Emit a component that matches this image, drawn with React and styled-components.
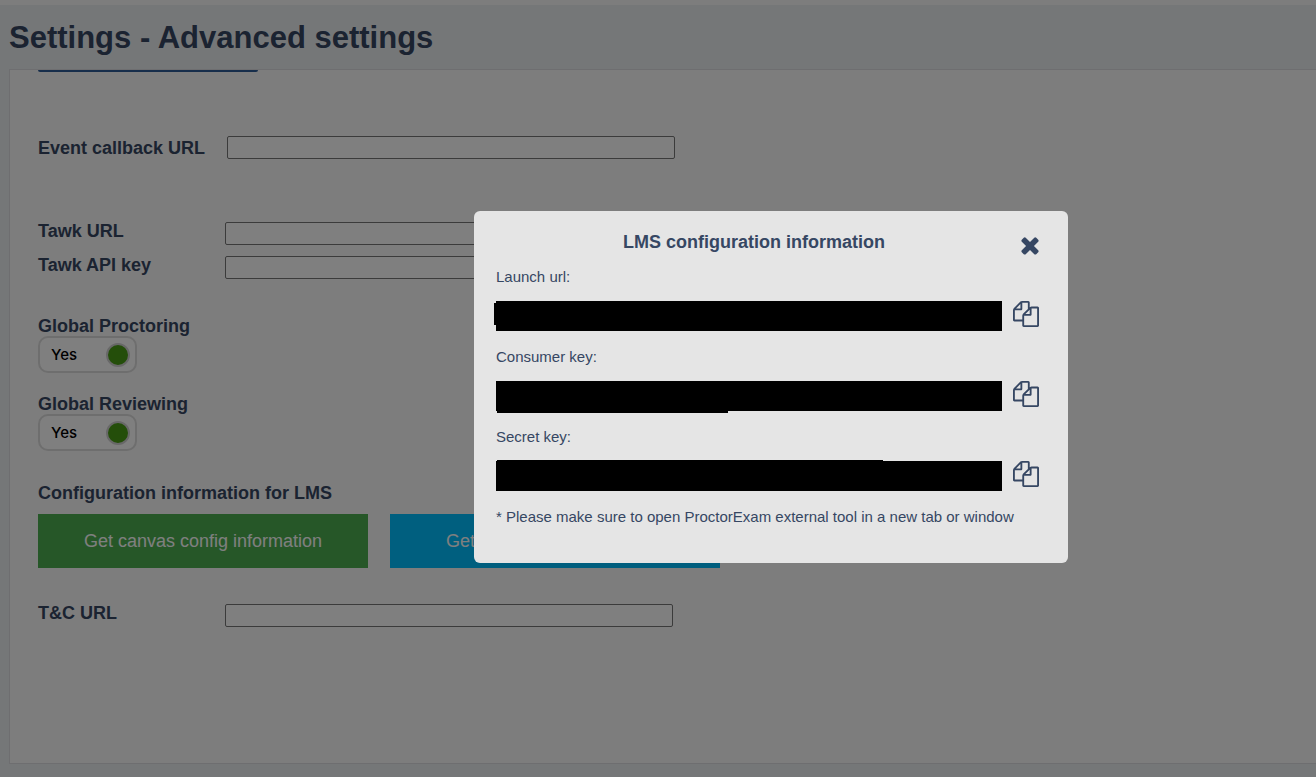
import React, { useState } from "react";
import styled, { createGlobalStyle } from "styled-components";

const ink = "#364763";
const blackFill = "linear-gradient(#000, #000)";

const GlobalStyle = createGlobalStyle`
  *, *::before, *::after { box-sizing: border-box; }
  body {
    margin: 0;
    background: #ebeef1;
    color: ${ink};
    font-family: "Liberation Sans", Arial, sans-serif;
    font-size: 15px;
  }
`;

const Page = styled.main`
  display: flex;
  flex-direction: column;
  min-height: 100vh;
  padding: 0 0 13px 9px;
  border-top: 5px solid #fbfbfb;
  overflow: hidden;
`;

const PageTitle = styled.h1`
  margin: 0;
  padding: 15px 0 13px;
  font-size: 31px;
  line-height: 36px;
`;

const Panel = styled.section`
  flex: 1;
  padding: 0 28px 40px;
  background: #fafafa;
  border: 1px solid #dcdde0;
  border-right: 0;
`;

const SectionEdge = styled.div`
  width: 220px;
  height: 2px;
  margin-bottom: 64px;
  background: #2f5d96;
  border-radius: 0 0 4px 4px;
`;

const Field = styled.div`
  display: grid;
  grid-template-columns: ${(p) => p.$labelWidth || 187}px minmax(0, 448px);
  align-items: ${(p) => p.$align || "start"};
  margin-bottom: ${(p) => p.$after || 0}px;
`;

const FieldLabel = styled.label`
  font-size: 18px;
  font-weight: bold;
  line-height: 18px;
`;

const SwitchLabel = styled(FieldLabel)`
  line-height: 20px;
`;

const TextBox = styled.input`
  width: 100%;
  height: 23px;
  padding: 1px 4px;
  background: #fff;
  border: 1px solid #767676;
  border-radius: 2px;
  font: inherit;
`;

const SwitchGroup = styled.div`
  display: flex;
  flex-direction: column;
  align-items: flex-start;
  margin-bottom: 21px;
`;

const GroupTitle = styled.h2`
  margin: 32px 0 0;
  font-size: 18px;
  line-height: 20px;
`;

const SwitchButton = styled.button`
  display: flex;
  align-items: center;
  justify-content: space-between;
  width: 99px;
  height: 37px;
  padding: 0 5px 0 11px;
  background: #fff;
  border: 2px solid #dcdcdc;
  border-radius: 10px;
  color: #000;
  font-family: Inter, "Liberation Sans", sans-serif;
  font-size: 15px;
  font-weight: 500;
`;

const SwitchKnob = styled.span`
  width: 24px;
  height: 24px;
  background: #489c14;
  border: 2px solid #d0d0d0;
  border-radius: 50%;
`;

const ButtonRow = styled.div`
  display: flex;
  gap: 22px;
  margin: 11px 0 36px;
`;

const ActionButton = styled.button`
  width: 330px;
  height: 54px;
  padding: 0;
  background: ${(p) => p.$color};
  border: 0;
  color: #fff;
  font-family: inherit;
  font-size: 18px;
`;

const Backdrop = styled.div`
  position: fixed;
  inset: 0;
  display: flex;
  align-items: center;
  justify-content: center;
  padding-left: 226px;
  padding-bottom: 3px;
  background: rgba(0, 0, 0, 0.5);
`;

const Dialog = styled.div`
  width: 594px;
  padding: 20px 28px 36px 22px;
  background: #e5e5e5;
  border-radius: 6px;
`;

const DialogHeader = styled.header`
  display: flex;
  align-items: flex-start;
  height: 36px;
`;

const DialogTitle = styled.h2`
  flex: 1;
  margin: 0;
  font-size: 18px;
  line-height: 22px;
  text-align: center;
`;

const IconButton = styled.button`
  display: flex;
  align-items: flex-start;
  width: 28px;
  padding: 0;
  background: none;
  border: 0;
  color: ${ink};

  svg {
    flex-shrink: 0;
  }
`;

const CloseButton = styled(IconButton)`
  padding: 1px 0 0 5px;
`;

const ConfigItem = styled.div`
  display: grid;
  grid-template-columns: minmax(0, 506px) 28px;
  column-gap: 10px;
  row-gap: 14px;
  margin-bottom: 16px;
`;

const ConfigLabel = styled.label`
  grid-column: 1 / -1;
  line-height: 20px;
`;

const HiddenValue = styled.input`
  width: calc(100% + 2px);
  height: 33px;
  margin: -1px 0 -2px -2px;
  padding: 0 8px;
  background:
    ${blackFill} 2px 1px / 506px 30px no-repeat,
    ${blackFill} ${(p) => p.$edge} no-repeat;
  border: 0;
  color: #000;
`;

const DialogNote = styled.p`
  margin: 0;
  line-height: 20px;
`;

const CloseIcon = () => (
  <svg width="26" height="26" viewBox="0 0 1792 1792" fill="currentColor" aria-hidden="true">
    <path d="M1490 1322q0 40-28 68l-136 136q-28 28-68 28t-68-28l-294-294-294 294q-28 28-68 28t-68-28l-136-136q-28-28-28-68t28-68l294-294-294-294q-28-28-28-68t28-68l136-136q28-28 68-28t68 28l294 294 294-294q28-28 68-28t68 28l136 136q28 28 28 68t-28 68l-294 294 294 294q28 28 28 68z" />
  </svg>
);

const CopyIcon = () => (
  <svg width="28" height="26" viewBox="0 0 1792 1792" fill="currentColor" aria-hidden="true">
    <path d="M1696 384q40 0 68 28t28 68v1216q0 40-28 68t-68 28h-960q-40 0-68-28t-28-68v-288h-544q-40 0-68-28t-28-68v-672q0-40 20-88t48-76l408-408q28-28 76-48t88-20h416q40 0 68 28t28 68v328q68-40 128-40h416zm-544 213l-299 299h299v-299zm-640-384l-299 299h299v-299zm196 647l316-316v-416h-384v416q0 40-28 68t-68 28h-416v640h512v-256q0-40 20-88t48-76zm956 804v-1152h-384v416q0 40-28 68t-68 28h-416v640h896z" />
  </svg>
);

function TextField({ id, label, ...layout }) {
  return (
    <Field {...layout}>
      <FieldLabel htmlFor={id}>{label}</FieldLabel>
      <TextBox id={id} type="text" />
    </Field>
  );
}

function YesNoSwitch({ id, label }) {
  const [on, setOn] = useState(true);
  return (
    <SwitchGroup>
      <SwitchLabel htmlFor={id}>{label}</SwitchLabel>
      <SwitchButton id={id} type="button" role="switch" aria-checked={on} onClick={() => setOn(!on)}>
        {on ? "Yes" : "No"}
        <SwitchKnob />
      </SwitchButton>
    </SwitchGroup>
  );
}

const configItems = [
  { id: "launch", label: "Launch url:", edge: "0 3px / 2px 22px" },
  { id: "consumer", label: "Consumer key:", edge: "3px 31px / 231px 2px" },
  { id: "secret", label: "Secret key:", edge: "3px 0 / 386px 1px" },
];

export default function App() {
  const [open, setOpen] = useState(true);
  return (
    <>
      <GlobalStyle />
      <Page>
        <PageTitle>Settings - Advanced settings</PageTitle>
        <Panel>
          <SectionEdge />
          <TextField id="callback" label="Event callback URL" $labelWidth={189} $align="center" $after={63} />
          <TextField id="tawk-url" label="Tawk URL" $after={11} />
          <TextField id="tawk-key" label="Tawk API key" $after={37} />
          <YesNoSwitch id="proctoring" label="Global Proctoring" />
          <YesNoSwitch id="reviewing" label="Global Reviewing" />
          <GroupTitle>Configuration information for LMS</GroupTitle>
          <ButtonRow>
            <ActionButton type="button" $color="#4caf50">Get canvas config information</ActionButton>
            <ActionButton type="button" $color="#00bfff" onClick={() => setOpen(true)}>
              Get LMS config information
            </ActionButton>
          </ButtonRow>
          <TextField id="terms" label="T&C URL" />
        </Panel>
      </Page>
      {open && (
        <Backdrop>
          <Dialog role="dialog" aria-modal="true" aria-labelledby="dialog-title">
            <DialogHeader>
              <DialogTitle id="dialog-title">LMS configuration information</DialogTitle>
              <CloseButton type="button" aria-label="Close" onClick={() => setOpen(false)}>
                <CloseIcon />
              </CloseButton>
            </DialogHeader>
            {configItems.map((item) => (
              <ConfigItem key={item.id}>
                <ConfigLabel htmlFor={item.id}>{item.label}</ConfigLabel>
                <HiddenValue id={item.id} type="text" readOnly $edge={item.edge} />
                <IconButton type="button" aria-label={`Copy ${item.label}`}>
                  <CopyIcon />
                </IconButton>
              </ConfigItem>
            ))}
            <DialogNote>* Please make sure to open ProctorExam external tool in a new tab or window</DialogNote>
          </Dialog>
        </Backdrop>
      )}
    </>
  );
}
